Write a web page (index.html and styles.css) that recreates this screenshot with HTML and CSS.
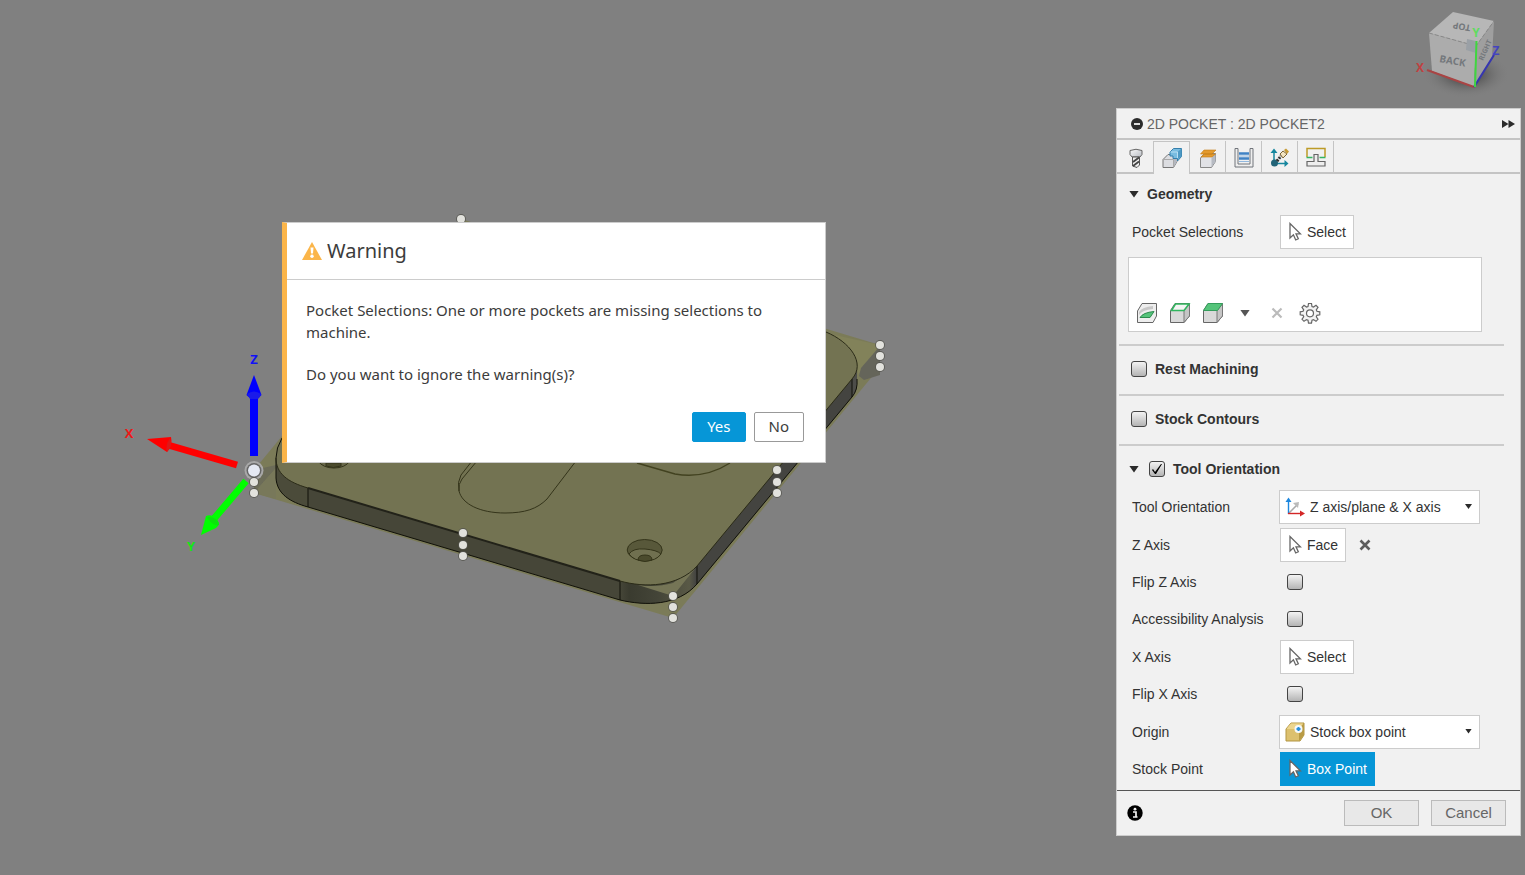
FILE: index.html
```
<!DOCTYPE html>
<html lang="en">
<head>
<meta charset="utf-8">
<title>2D Pocket</title>
<link rel="stylesheet" href="styles.css">
</head>
<body>
<svg class="defs" aria-hidden="true">
  <defs>
    <linearGradient id="metal" x1="0" y1="0" x2="1" y2="1"><stop offset="0" stop-color="#fafafa"/><stop offset="1" stop-color="#b9bdc4"/></linearGradient>
    <linearGradient id="side" x1="0" x2="1"><stop offset="0" stop-color="#464638"/><stop offset=".12" stop-color="#3a3b2f"/><stop offset=".5" stop-color="#444538"/><stop offset=".9" stop-color="#595946"/><stop offset="1" stop-color="#404040"/></linearGradient>
    <radialGradient id="shade"><stop offset=".4" stop-color="#555" stop-opacity=".75"/><stop offset="1" stop-color="#808080" stop-opacity="0"/></radialGradient>
  </defs>
  <symbol id="cursor" viewBox="0 0 14 20"><path d="M2 1.500v14.500l3.400-3.200 2.300 5.200 2.600-1.200-2.300-5h4.400z" fill="#fff" stroke="#666" stroke-width="1.300"/></symbol>
  <symbol id="dot" viewBox="0 0 12 12"><circle cx="6" cy="6" r="4.900" fill="#55554f" fill-opacity=".85"/><circle cx="6" cy="6" r="4" fill="#e2e2dd"/></symbol>
</svg>

<main class="viewport">
  <svg class="scene" viewBox="0 0 1525 875" preserveAspectRatio="xMinYMin slice" role="img" aria-label="Model">
    <path d="M254 470L461 219 880 345V367L673 618 254 493z" fill="#7b7b58"/>
    <path d="M254 470v23l22-25v-3z" fill="#6c6c58"/>
    <path d="M254 493l22-25v31z" fill="#78785a"/>
    <path d="M826 333l54 12-26 35z" fill="#82825a"/>
    <path d="M880 346l-19 22-2 8 5 4 16-5z" fill="#65655a"/>
    <path d="M276 458V478C277 494 290 502 308 507L620 600C645 606 678 606 697 584L852 397Q858 390 857 366L697 560 308 485z" fill="#464638"/>
    <path d="M276 460V478C277 494 290 502 308 507V488C285 481 277 472 276 460z" fill="#4b4b3a"/>
    <path d="M620 581V600C645 606 678 606 697 584V560z" fill="url(#side)"/>
    <path d="M697 566L852 379V397L697 584z" fill="#444440"/>
    <path d="M852 379Q857 374 857 365V385Q857 391 852 397z" fill="#4d4d49"/>
    <path d="M276 458C276 436 300 415 420 270L826 332C850 342 866 363 852 379L697 566C678 587 645 588 620 581L308 488C287 482 276 473 276 458z" fill="#737352"/>
    <path d="M638 585C650 587 662 586 673 583L697 566 673 596z" fill="#757556"/>
    <g fill="none" stroke="#111109">
      <path d="M282 438Q276 448 276 458V478C277 494 290 502 308 507L620 600C645 606 678 606 697 584L852 397Q858 390 857 379"/>
      <path d="M308 488V507M620 581V600M697 566V584M852 379V397"/>
      <path d="M276 458C276 473 287 482 308 488" stroke="#2b2b18"/>
      <path d="M308 488L620 581" stroke="#222219" stroke-width="2"/>
      <path d="M620 581C645 588 678 587 697 566L852 379C866 363 850 342 826 332" stroke="#2b2b18"/>
    </g>
    <g fill="none" stroke="#424220">
      <path d="M477 461L462 479Q458 484 459 491C462 504 480 513 505 513C525 513 537 509 547 499L576 461" stroke="#34341a"/>
      <path d="M472 461L461 475Q457 482 459 491" stroke="#34341a"/>
      <path d="M637 463L675 474Q705 479 730 463" stroke-width="1.400"/>
    </g>
    <g stroke="#34341a">
      <ellipse cx="644.700" cy="550" rx="17.500" ry="10.500" fill="#58583a"/>
      <path d="M629 554q4-6 16-5t16 5q-5 7-16 7t-16-7z" fill="#707050"/>
      <path d="M638 560q0-5 7-5t7 5q-7 3-14 0z" fill="#4b4b2d"/>
      <path d="M318 461q5 7 16 7t16-7z" fill="#68684a"/>
      <path d="M326 463h15v3q-8 3-15 0z" fill="#4b4b2d"/>
    </g>
    <path d="M254 456V393" stroke="#0000fe" stroke-width="8"/>
    <path d="M254 375l7.500 20q-7.500 8-15 0z" fill="#0000fe"/>
    <path d="M247 394q7-5 14 0-1 4-3 5h-8z" fill="#1a1aea"/>
    <path d="M237 465L168 445" stroke="#fe0000" stroke-width="7"/>
    <path d="M147 439l24-2q2 8-4 15z" fill="#fe0000"/><path d="M170 438q-5 7-3 14 6-5 3-14z" fill="#df1717"/>
    <path d="M246 481L212 521" stroke="#00fe00" stroke-width="7"/>
    <path d="M201 535l5-19q8-3 13 7-1 4-3 5z" fill="#00fe00"/><path d="M207 517q6 10 12 8-2-9-12-8z" fill="#0ce40c"/>
    <g class="axis-label">
      <text x="254" y="364" fill="#1111f5">Z</text><text x="129" y="438" fill="#ee1818">X</text><text x="191" y="551" fill="#12e612">Y</text>
    </g>
    <circle cx="254" cy="470.500" r="9.500" fill="#a8a8a8"/><circle cx="254" cy="470.500" r="7.500" fill="#666"/><circle cx="254" cy="470.500" r="6" fill="#e4e8f2"/>
    <g>
      <use href="#dot" x="248" y="476" width="12" height="12"/><use href="#dot" x="248" y="487" width="12" height="12"/>
      <use href="#dot" x="455" y="213" width="12" height="12"/>
      <use href="#dot" x="457" y="527" width="12" height="12"/><use href="#dot" x="457" y="539" width="12" height="12"/><use href="#dot" x="457" y="550" width="12" height="12"/>
      <use href="#dot" x="667" y="590" width="12" height="12"/><use href="#dot" x="667" y="601" width="12" height="12"/><use href="#dot" x="667" y="612" width="12" height="12"/>
      <use href="#dot" x="771" y="464" width="12" height="12"/><use href="#dot" x="771" y="476" width="12" height="12"/><use href="#dot" x="771" y="487" width="12" height="12"/>
      <use href="#dot" x="874" y="339" width="12" height="12"/><use href="#dot" x="874" y="350" width="12" height="12"/><use href="#dot" x="874" y="361" width="12" height="12"/>
    </g>
  </svg>

  <svg class="viewcube" viewBox="0 0 125 110" role="img" aria-label="View cube">
    <ellipse cx="66" cy="74" rx="44" ry="24" fill="url(#shade)"/>
    <path d="M29 33L76 46 74 87 32 71z" fill="#acacac"/>
    <path d="M29 33L53 12 94 21 76 46z" fill="#b7b7b7"/>
    <path d="M76 46L94 21 92 57 74 87z" fill="#9f9f9f"/>
    <path d="M29 33L76 46 94 21" fill="none" stroke="#888" stroke-dasharray="4 2"/>
    <path d="M67 39l9 2v12l-10-3z" fill="#9aa0a6"/>
    <text class="cube-label" transform="translate(39 62) rotate(10)">BACK</text>
    <text class="cube-label cube-top" transform="translate(71 25) rotate(190)">TOP</text>
    <text class="cube-label cube-right" transform="translate(83 61) rotate(-66)">RIGHT</text>
    <path d="M27 70L74 87" stroke="#a94444" stroke-width="2"/>
    <path d="M74 87L94 55" stroke="#3636b0" stroke-width="2"/>
    <path d="M75 87L76.500 41" stroke="#3fd63f" stroke-width="2"/>
    <g class="cube-axis"><text x="20" y="72" fill="#c04040">X</text><text x="76" y="37" fill="#5fdc5f">Y</text><text x="96" y="55" fill="#4444c0">Z</text></g>
  </svg>

  <section class="dialog" role="alertdialog" aria-labelledby="warn-title" aria-describedby="warn-text">
    <header class="dialog-head">
      <svg class="warn-icon" viewBox="0 0 20 18"><path d="M10 0L20 18H0z" fill="#fbb549"/><path d="M8.500 5.500h3l-.5 6H9z" fill="#fff"/><circle cx="10" cy="14.300" r="1.700" fill="#fff"/></svg>
      <h1 class="dialog-title" id="warn-title">Warning</h1>
    </header>
    <div class="dialog-body" id="warn-text">
      <p class="dialog-text">Pocket Selections: One or more pockets are missing selections to machine.</p>
      <p class="dialog-text">Do you want to ignore the warning(s)?</p>
    </div>
    <div class="dialog-actions">
      <button class="dialog-btn primary" type="button">Yes</button>
      <button class="dialog-btn" type="button">No</button>
    </div>
  </section>

  <form class="panel" aria-labelledby="panel-title">
    <header class="panel-head">
      <svg class="ico12" viewBox="0 0 12 12"><circle cx="6" cy="6" r="6" fill="#2b2b2b"/><path d="M3 6h6" stroke="#ddd" stroke-width="2"/></svg>
      <h2 class="panel-title" id="panel-title">2D POCKET : 2D POCKET2</h2>
      <svg class="expand" viewBox="0 0 13 8"><path d="M0 0l6.500 4L0 8zM6.500 0L13 4 6.500 8z" fill="#2b2b2b"/></svg>
    </header>
    <nav class="tabs" aria-label="Operation settings">
      <button class="tab" type="button" aria-label="Tool"><svg viewBox="0 0 22 22"><path d="M5 3.500q6-2.500 12 0v4L15 10H7L5 7.500z" fill="url(#metal)" stroke="#666"/><path d="M7.500 10h7v8L12 20.500 7.500 19z" fill="#eee" stroke="#555"/><path d="M8 15l6-4.500M8 19l6-4.500" stroke="#444" stroke-width="1.800"/></svg></button>
      <button class="tab active" type="button" aria-label="Geometry" aria-current="true"><svg viewBox="0 0 22 22"><path d="M2 12.500l5-5h9v7l-3.500 6H2z" fill="#dcdde1" stroke="#777"/><path d="M12.500 12.500v8l3.500-6V9z" fill="#b4b8c0"/><path d="M2 12.500h10.500v8" fill="none" stroke="#aaa"/><path d="M9 5l3.500-3.500H20.500V9.500l-4 4.500v-2.500H12V9H9z" fill="#79bce0" stroke="#357fab"/><path d="M16.500 12V5l4-3.500V9.500z" fill="#4d99c4"/><path d="M9.500 5h7v6" fill="none" stroke="#b8dff3"/></svg></button>
      <button class="tab" type="button" aria-label="Heights"><svg viewBox="0 0 22 22"><path d="M3.500 11l4-4.500h11v8l-4 6h-11z" fill="#e1e2e6" stroke="#888"/><path d="M14.500 11v9l4-5.500v-8z" fill="#b6bac2"/><path d="M3.500 7L7 3h12l-4 4zM4 10l3.500-3h11L15 10z" fill="#e39a2e" stroke="#c27a12" stroke-width=".6"/></svg></button>
      <button class="tab" type="button" aria-label="Passes"><svg viewBox="0 0 22 22"><path d="M2 1.500h3v15.500h12V1.500h3v18.500H2z" fill="#eee" stroke="#71757b"/><path d="M6 6.500h10M6 11.500h10" stroke="#3f82c5" stroke-width="2.400"/><path d="M6 9h10M6 14.500h10" stroke="#91b8df"/></svg></button>
      <button class="tab" type="button" aria-label="Linking"><svg viewBox="0 0 22 22"><path d="M5 16V4M5 16.500h12" stroke="#16869e" stroke-width="1.500"/><path d="M1.500 6L5 1.500 8.500 6zM15.500 13l4 3.500-4 3.500z" fill="#16869e"/><circle cx="5.500" cy="16" r="3.500" fill="#226478"/><path d="M8 14l4-5" stroke="#333" stroke-width="3" stroke-dasharray="2 1"/><path d="M11 7l3-3 4 3-4 4z" fill="#f3e4c1" stroke="#7c6537"/><path d="M15 3l2-1.500 3 3L18 7z" fill="#c79b36"/></svg></button>
      <button class="tab" type="button" aria-label="Probe"><svg viewBox="0 0 22 22"><path d="M2 10V1.500h18V10" fill="none" stroke="#bd9b27" stroke-width="1.500"/><path d="M1.500 10.500h6M14.500 10.500h6" stroke="#35b462" stroke-width="1.500"/><path d="M9 7.500h4v7h7v4.500H2v-4.500h7z" fill="#eee" stroke="#666" stroke-width="1.200"/></svg></button>
    </nav>

    <div class="panel-body">
      <h3 class="section-head"><span class="tri"></span>Geometry</h3>
      <div class="row lead">
        <span class="label" id="l-pocket">Pocket Selections</span>
        <button class="pick" type="button" aria-describedby="l-pocket"><svg class="cursor"><use href="#cursor"/></svg>Select</button>
      </div>
      <div class="selection-box">
        <button class="tool" type="button" aria-label="Pocket recognition"><svg viewBox="0 0 22 22"><path d="M1.500 9L6 1.500h14.500V14L17 20.500H1.500z" fill="#eee" stroke="#666"/><path d="M3 10q3-5 14-6v3Q6 8 3 13z" fill="#c8c8c8"/><path d="M4 15.500q3-5 14-6l-4 6z" fill="#55c47a" stroke="#2d8a4e"/></svg></button>
        <button class="tool" type="button" aria-label="Closed contour"><svg viewBox="0 0 22 22"><path d="M1.500 8.500L6 1.500h14.500V14L15 20.500H1.500z" fill="#d9d9d9" stroke="#666"/><path d="M15 8.500v12l5.500-6.500V2z" fill="#c5c5c5" stroke="#777"/><path d="M2.500 8.500L6.500 2h13.500l-5 6.500z" fill="#f4f4f4" stroke="#30b65e" stroke-width="1.500"/></svg></button>
        <button class="tool" type="button" aria-label="Face selection"><svg viewBox="0 0 22 22"><path d="M1.500 8.500L6 1.500h14.500V14L15 20.500H1.500z" fill="#d9d9d9" stroke="#666"/><path d="M15 8.500v12l5.500-6.500V2z" fill="#c5c5c5" stroke="#777"/><path d="M1.500 8.500L6 1.500h14.500L15.500 8.500z" fill="#55c47a" stroke="#359d5c"/></svg></button>
        <button class="tool more" type="button" aria-label="More"><span class="tri small"></span></button>
        <button class="tool" type="button" aria-label="Remove"><svg viewBox="0 0 22 22"><path d="M6.500 6.500l9 9m0-9l-9 9" stroke="#bbb" stroke-width="2.200"/></svg></button>
        <button class="tool" type="button" aria-label="Settings"><svg viewBox="0 0 22 22"><path d="M9.500 1.500h3l.5 3 1.500.6 2.500-1.800 2 2-1.700 2.500.6 1.500 2.900.5v3l-2.900.5-.6 1.500 1.700 2.500-2 2-2.500-1.700-1.500.6-.5 2.900h-3l-.5-2.900-1.500-.6L5 19.300l-2-2 1.700-2.500-.6-1.500-2.900-.5v-3l2.900-.5.6-1.500L3 5.300l2-2 2.500 1.800L9 4.500z" fill="#f3f3f3" stroke="#666" stroke-width="1.200"/><circle cx="11" cy="11.300" r="3.500" fill="#fff" stroke="#666" stroke-width="1.200"/></svg></button>
      </div>
      <label class="section-check"><input class="check" type="checkbox">Rest Machining</label>
      <label class="section-check"><input class="check" type="checkbox">Stock Contours</label>
      <div class="section-check orient">
        <span class="tri"></span><input class="check" type="checkbox" id="orient" checked><label for="orient">Tool Orientation</label>
      </div>
      <div class="row tall">
        <label class="label" for="s-orient">Tool Orientation</label>
        <span class="drop"><select class="drop-select" id="s-orient"><option>Z axis/plane &amp; X axis</option></select>
          <svg class="drop-icon" viewBox="0 0 20 20"><path d="M4 16l9-9" stroke="#aaa" stroke-width="1.500"/><path d="M8 6l6-1-1 6z" fill="#bbb"/><path d="M3.500 17V3" stroke="#1d87df" stroke-width="1.400"/><path d="M.5 5l3-4.500 3 4.500z" fill="#1d87df"/><path d="M3 16.500h13" stroke="#d32626" stroke-width="1.400"/><path d="M15 13.500l5 3-5 3z" fill="#d32626"/></svg></span>
      </div>
      <div class="row">
        <span class="label" id="l-z">Z Axis</span>
        <button class="pick" type="button" aria-describedby="l-z"><svg class="cursor"><use href="#cursor"/></svg>Face</button>
        <button class="clear" type="button" aria-label="Clear"><svg class="ico12" viewBox="0 0 12 12"><path d="M1.500 1.500l9 9m0-9l-9 9" stroke="#5c5c5c" stroke-width="2.600"/></svg></button>
      </div>
      <div class="row"><label class="label" for="flip-z">Flip Z Axis</label><input class="check in-row" type="checkbox" id="flip-z"></div>
      <div class="row tall"><label class="label" for="access">Accessibility Analysis</label><input class="check in-row" type="checkbox" id="access"></div>
      <div class="row">
        <span class="label" id="l-x">X Axis</span>
        <button class="pick" type="button" aria-describedby="l-x"><svg class="cursor"><use href="#cursor"/></svg>Select</button>
      </div>
      <div class="row tall"><label class="label" for="flip-x">Flip X Axis</label><input class="check in-row" type="checkbox" id="flip-x"></div>
      <div class="row">
        <label class="label" for="s-origin">Origin</label>
        <span class="drop"><select class="drop-select" id="s-origin"><option>Stock box point</option></select>
          <svg class="drop-icon" viewBox="0 0 20 20"><path d="M1 7l5-6h13v12l-4 6H1z" fill="#dcc06e" stroke="#b39643"/><path d="M14 7v12l5-6V1z" fill="#b99b45"/><path d="M1.500 7L6 1.500h12L14 7z" fill="#ecd58e"/><circle cx="13.500" cy="7" r="4" fill="#f4f8fb"/><path d="M13.500 5v4M11.500 7h4" stroke="#2a8fd8" stroke-width="2"/></svg></span>
      </div>
      <div class="row">
        <span class="label" id="l-point">Stock Point</span>
        <button class="pick on" type="button" aria-describedby="l-point"><svg class="cursor"><use href="#cursor"/></svg>Box Point</button>
      </div>
    </div>

    <footer class="panel-foot">
      <button class="info" type="button" aria-label="Info"><svg viewBox="0 0 16 16"><circle cx="8" cy="8" r="7.700" fill="#000"/><circle cx="8" cy="4.200" r="1.400" fill="#f1f1f1"/><path d="M6 7h3v4.500M6 12h4.500" fill="none" stroke="#f1f1f1" stroke-width="1.700"/></svg></button>
      <button class="foot-btn" type="button">OK</button>
      <button class="foot-btn" type="button">Cancel</button>
    </footer>
  </form>
</main>
</body>
</html>
```
FILE: styles.css
```
* { box-sizing: border-box; }
body { margin: 0; background: #808080; color: #333; font: 14px/20px "Liberation Sans", Arial, sans-serif; }
h1, h2, h3, p { margin: 0; font-weight: normal; }
button { font: inherit; color: inherit; margin: 0; padding: 0; border: 0; background: none; }
svg { display: block; flex: none; }
.defs { position: absolute; width: 0; height: 0; }

.viewport { position: relative; min-height: 100vh; overflow: hidden; }
.scene { position: absolute; inset: 0; width: 100%; height: 100%; }
.axis-label { font: bold 13px "Open Sans", sans-serif; text-anchor: middle; }
.viewcube { position: absolute; top: 0; right: 0; width: 125px; height: 110px; }
.cube-label { font: bold 10px "Noto Sans", sans-serif; fill: #74787c; }
.cube-top { font-size: 9px; }
.cube-right { font-size: 7px; }
.cube-axis { font: bold 12px "Open Sans", sans-serif; text-anchor: middle; }

.dialog { position: absolute; top: 222px; left: 282px; width: 544px; max-width: 100%; background: #fff; border: 1px solid #ccc; border-left: 5px solid #fbb549; color: #3c3c3c; font: 15px/22px "Noto Sans", sans-serif; }
.dialog-head { display: flex; align-items: center; gap: 5px; height: 57px; padding-left: 15px; border-bottom: 1px solid #ccc; }
.warn-icon { width: 20px; height: 18px; }
.dialog-title { font-size: 20px; line-height: 28px; }
.dialog-body { display: grid; gap: 20px; padding: 19px 40px 0 19px; }
.dialog-actions { display: flex; justify-content: flex-end; gap: 8px; padding: 27px 21px 20px; }
.dialog-btn { height: 30px; padding: 0 14px 2px; border: 1px solid #999; border-radius: 2px; background: #fff; }
.dialog-btn.primary { background: #0696d7; border-color: #0696d7; color: #fff; }

.panel { position: absolute; top: 108px; right: 4px; width: 405px; background: #f1f1f1; border: 1px solid #ccc; }
.panel-head { display: flex; align-items: center; height: 31px; padding: 0 5px 0 14px; gap: 4px; border-bottom: 2px solid #c4c4c4; }
.ico12 { width: 12px; height: 12px; }
.panel-title { flex: 1; font-size: 14px; line-height: 20px; color: #666; }
.expand { width: 13px; height: 8px; }
.tabs { display: flex; height: 34px; padding: 1px 0 0 1px; box-shadow: inset 0 -2px #c4c4c4; }
.tab { display: grid; place-items: center; width: 36px; border-right: 1px solid #c4c4c4; }
.tab svg { width: 22px; height: 22px; }
.tab.active { border-top: 1px solid #c4c4c4; background: #f1f1f1; }

.panel-body { padding: 0 16px 3px 2px; }
.section-head { display: flex; align-items: center; gap: 8px; height: 40px; padding-left: 10px; font-size: 14px; font-weight: bold; }
.tri { width: 10px; height: 7px; background: #2b2b2b; clip-path: polygon(0 0, 100% 0, 50% 100%); }
.row { display: flex; align-items: center; height: 37px; padding-left: 13px; }
.row.tall { height: 38px; }
.row.lead { height: 35px; }
.label { width: 148px; }
.pick { display: flex; align-items: center; gap: 5px; height: 34px; padding: 0 7px; border: 1px solid #ccc; background: #fff; }
.pick.on { background: #0696d7; border-color: #0696d7; color: #fff; }
.cursor { width: 14px; height: 20px; }
.clear { margin-left: 13px; }
.selection-box { display: flex; align-items: flex-end; gap: 11px; height: 75px; margin: 8px 22px 12px 9px; padding: 0 7px 7px; border: 1px solid #ccc; background: #fff; }
.tool { display: grid; place-items: center; width: 22px; height: 22px; }
.tool svg { width: 22px; height: 22px; }
.tool.more { width: 20px; }
.tri.small { background: #555; }
.section-check { display: flex; align-items: center; gap: 8px; height: 50px; padding: 0 0 2px 12px; border-top: 2px solid #ccc; font-weight: bold; }
.section-check.orient { height: 44px; padding: 4px 0 0 10px; }
.orient .check { margin-left: 2px; }
.check { appearance: none; width: 16px; height: 16px; margin: 0; border: 1px solid #444; border-radius: 3px; background: linear-gradient(#f3f3f3, #b4b4b4); }
.check:checked { display: grid; place-items: center; }
.check:checked::before { content: ""; width: 14px; height: 14px; background: #000; clip-path: polygon(2px 8px, 3px 7px, 5px 10px, 11px 2px, 12px 2px, 6px 12px, 5px 12px); }
.check.in-row { margin-left: 7px; }
.drop { position: relative; width: 201px; margin-left: -1px; }
.drop-select { appearance: none; display: block; width: 100%; height: 34px; padding: 0 24px 0 30px; border: 1px solid #ccc; border-radius: 0; background: #fff; color: inherit; font: inherit; }
.drop::after { content: ""; position: absolute; right: 8px; top: 14px; width: 7px; height: 5px; background: #2b2b2b; clip-path: polygon(0 0, 100% 0, 50% 100%); }
.drop-icon { position: absolute; left: 6px; top: 7px; width: 20px; height: 20px; }

.panel-foot { display: flex; align-items: center; gap: 12px; height: 45px; padding: 0 14px 0 10px; border-top: 1px solid #555; }
.info { margin-right: auto; }
.info svg { width: 16px; height: 16px; }
.foot-btn { width: 75px; height: 26px; border: 1px solid #bbb; background: #e8e8e8; color: #666; font-size: 15px; }
```
